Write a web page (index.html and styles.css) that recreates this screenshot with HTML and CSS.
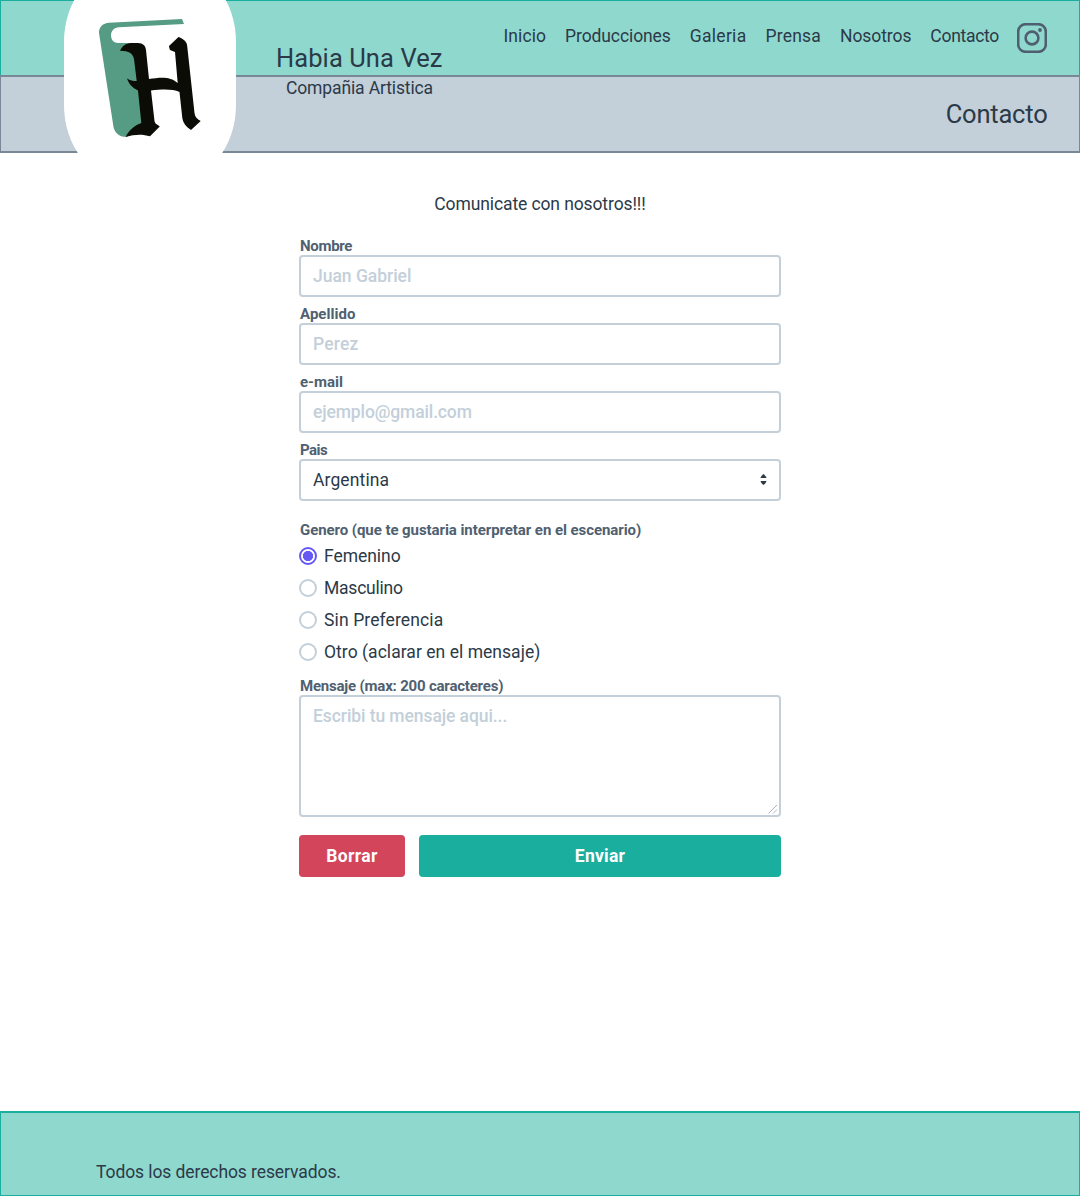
FILE: index.html
```
<!DOCTYPE html>
<html lang="es">
<head>
<meta charset="utf-8">
<title>Contacto - Habia Una Vez</title>
<link rel="stylesheet" href="styles.css">
</head>
<body>
<header class="header">
  <div class="topbar">
    <h1 class="brand">Habia Una Vez</h1>
    <nav class="nav">
      <a class="t-inicio">Inicio</a>
      <a class="t-producciones">Producciones</a>
      <a class="t-galeria">Galeria</a>
      <a class="t-prensa">Prensa</a>
      <a class="t-nosotros">Nosotros</a>
      <a class="t-contacto">Contacto</a>
    </nav>
    <svg class="instagram" viewBox="0 0 30 30" fill="none" stroke="#4f5f70">
      <rect x="1.2" y="1.2" width="27.6" height="27.6" rx="7.4" stroke-width="2.6"/>
      <circle cx="15" cy="15" r="6.4" stroke-width="2.6"/>
      <circle cx="23" cy="7" r="1.9" fill="#4f5f70" stroke="none"/>
    </svg>
  </div>
  <div class="subbar">
    <p class="tagline">Compañia Artistica</p>
    <h2 class="page-title">Contacto</h2>
  </div>
  <div class="logo">
    <svg viewBox="0 0 200 160">
      <path fill="#569b84" d="M132 19L134 24L69 27.3C64 27.600 61 31 61 35.500C61 40 64 43 68 43L84 43L94 124L80 135.500C78 136.500 76.500 137 74 136.800C68.500 136.300 64.500 132 63.500 127L49 33C48.800 27 53 23 59 22.700Z"/>
      <path fill="#0b0c06" d="M120 50C119.500 48 119 47 119 46L128.500 37C134 39 137 42 137.200 46L144.500 113C145 117 147 119 150.700 121L141 130C136 127 133 123 132.300 118L129.500 92C123 89 113 89 101 90.500L104.500 121C105 124 107 124 109.800 126.500L100 136.300C93 134 85 134 75.500 137C79 130 85 125 91.300 123L88 90.500C82 87.500 79 84 77 78.500C80 80.500 83 81 86.700 81L84 59C83 53.500 79 51 70 50.800C72 46 76 43.200 81 42.900L88 42.900C93 43 95.700 46 96 50L99 79C110 77.300 120 76 127.700 83L125 52Z"/>
    </svg>
  </div>
</header>

<main class="main">
  <p class="lead">Comunicate con nosotros!!!</p>
  <form class="form">
    <div class="field">
      <label class="label t-nombre" for="nombre">Nombre</label>
      <input class="input t-juan" id="nombre" type="text" placeholder="Juan Gabriel">
    </div>
    <div class="field">
      <label class="label t-apellido" for="apellido">Apellido</label>
      <input class="input t-perez" id="apellido" type="text" placeholder="Perez">
    </div>
    <div class="field">
      <label class="label t-email" for="email">e-mail</label>
      <input class="input t-ejemplo" id="email" type="text" placeholder="ejemplo@gmail.com">
    </div>
    <div class="field">
      <span class="label t-pais">Pais</span>
      <div class="input select">
        <span class="t-argentina">Argentina</span>
        <svg class="caret" viewBox="0 0 7 11" fill="#2b3a48"><path d="M3.500 0C4 .2 6 2.400 6.400 3.300Q6.500 4 5.800 4H1.200Q.5 4 .6 3.300C1 2.400 3 .2 3.500 0ZM3.500 11C4 10.800 6 8.600 6.400 7.700Q6.500 7 5.800 7H1.200Q.5 7 .6 7.700C1 8.600 3 10.800 3.500 11Z"/></svg>
      </div>
    </div>
    <fieldset class="radios">
      <legend class="label t-genero">Genero (que te gustaria interpretar en el escenario)</legend>
      <label class="option t-femenino"><input class="radio" type="radio" name="genero" checked>Femenino</label>
      <label class="option t-masculino"><input class="radio" type="radio" name="genero">Masculino</label>
      <label class="option t-sin"><input class="radio" type="radio" name="genero">Sin Preferencia</label>
      <label class="option t-otro"><input class="radio" type="radio" name="genero">Otro (aclarar en el mensaje)</label>
    </fieldset>
    <div class="field message">
      <label class="label t-mensaje" for="mensaje">Mensaje (max: 200 caracteres)</label>
      <textarea class="input textarea t-escribi" id="mensaje" placeholder="Escribi tu mensaje aqui..."></textarea>
      <svg class="grip" viewBox="0 0 10 10" fill="none" stroke="#aeb7c1" stroke-width="1"><path d="M.5 9.500L9 1M5 9.500L9 5.500"/></svg>
    </div>
    <div class="actions">
      <button class="button danger t-borrar" type="reset">Borrar</button>
      <button class="button success t-enviar" type="button">Enviar</button>
    </div>
  </form>
</main>

<footer class="footer">
  <p class="rights">Todos los derechos reservados.</p>
</footer>
</body>
</html>
```
FILE: styles.css
```
* { box-sizing: border-box; }
body {
  margin: 0;
  min-height: 1196px;
  display: flex;
  flex-direction: column;
  background: #fff;
  color: #2b3a48;
  font: 400 17.5px/24px Roboto, sans-serif;
}
h1, h2, p, fieldset { margin: 0; padding: 0; font-weight: 400; border: 0; }

.header { position: relative; height: 153px; }
.topbar {
  display: flex;
  height: 75px;
  padding: 0 32px 0 275px;
  background: #8fd8ce;
  border: solid #1aae9f;
  border-width: 1px 1px 0;
}
.brand { margin-top: 41px; font-size: 25.500px; line-height: 32px; letter-spacing: .08px; }
.nav { display: flex; gap: 19px; margin: 23px 18px 0 auto; }
.instagram { width: 30px; height: 30px; margin-top: 22px; }
.subbar {
  display: flex;
  justify-content: space-between;
  height: 78px;
  padding: 0 31.500px 0 285px;
  background: #c3cfd9;
  border: solid #788896;
  border-width: 2px 1px;
}
.tagline { margin-top: -1px; letter-spacing: -.13px; }
.page-title { margin-top: 21px; font-size: 25.500px; line-height: 32px; letter-spacing: -.2px; }
.logo {
  position: absolute;
  top: -33px;
  left: 64px;
  width: 172px;
  height: 213px;
  background: #fff;
  border-radius: 60px / 75px;
}
.logo svg { display: block; width: 200px; height: 160px; margin: 33px 0 0 -14px; }

.main { flex: 1; width: 482px; margin: 0 auto; }
.lead { margin-top: 39px; text-align: center; letter-spacing: -.11px; }
.form { margin-top: 21px; }
.field { position: relative; margin-bottom: 8px; }
.label {
  display: block;
  height: 18px;
  padding: 0 0 0 1px;
  color: #4f6070;
  font-size: 15px;
  font-weight: 700;
  line-height: 18px;
}
.input {
  display: block;
  width: 100%;
  height: 42px;
  margin: 0;
  padding: 7px 12px;
  color: #2b3a48;
  background: #fff;
  border: 2px solid #c3cfd9;
  border-radius: 4px;
  outline: 0;
  font: 400 17.5px/24px Roboto, sans-serif;
}
.input::placeholder { color: #c3cfd9; font-weight: 500; opacity: 1; }
.select { display: flex; justify-content: space-between; align-items: center; }
.caret { width: 7px; height: 11px; margin-bottom: 1px; }
.radios { margin-top: 20px; }
.radios .label { margin-bottom: 1px; }
.option { display: flex; align-items: center; height: 32px; }
.radio {
  appearance: none;
  width: 18px;
  height: 18px;
  margin: 0 7px 0 0;
  border: 2px solid #c3cfd9;
  border-radius: 50%;
}
.radio:checked { border-color: #6558f5; background: radial-gradient(circle, #6558f5 4.800px, #fff 5.400px); }
.message { margin: 5px 0 0; padding-top: 4px; }
.textarea { height: 122px; resize: none; }
.grip { position: absolute; right: 3px; bottom: 3px; width: 10px; height: 10px; }
.actions { display: grid; grid-template-columns: 106px 1fr; gap: 14px; margin-top: 18px; }
.button {
  height: 42px;
  padding: 0;
  color: #fff;
  border: 0;
  border-radius: 4px;
  font: 700 17.5px/24px Roboto, sans-serif;
}
.danger { background: #d3455b; }
.success { background: #1aae9f; }

.footer {
  height: 85px;
  padding: 47px 95px 0;
  background: #8fd8ce;
  border: solid #1aae9f;
  border-width: 2px 1px 1px;
}
.rights { letter-spacing: -.09px; }

.t-inicio { letter-spacing: .08px; }
.t-producciones { letter-spacing: -.1px; }
.t-galeria { letter-spacing: .3px; }
.t-prensa { letter-spacing: .2px; }
.t-nosotros { letter-spacing: -.08px; }
.t-contacto { letter-spacing: -.29px; }
.t-nombre { letter-spacing: -.3px; }
.t-apellido { letter-spacing: .04px; }
.t-email { letter-spacing: -.02px; }
.t-pais { letter-spacing: -.5px; }
.t-genero { letter-spacing: -.07px; }
.t-mensaje { letter-spacing: -.2px; }
.input.t-juan { letter-spacing: -.02px; }
.input.t-perez { letter-spacing: .15px; }
.input.t-ejemplo { letter-spacing: -.13px; }
.input.t-escribi { letter-spacing: -.08px; }
.t-argentina { letter-spacing: .12px; }
.t-femenino { letter-spacing: -.04px; }
.t-masculino { letter-spacing: -.22px; }
.t-sin { letter-spacing: .12px; }
.t-otro { letter-spacing: .04px; }
.t-borrar { letter-spacing: .35px; }
.t-enviar { letter-spacing: .25px; }
```
